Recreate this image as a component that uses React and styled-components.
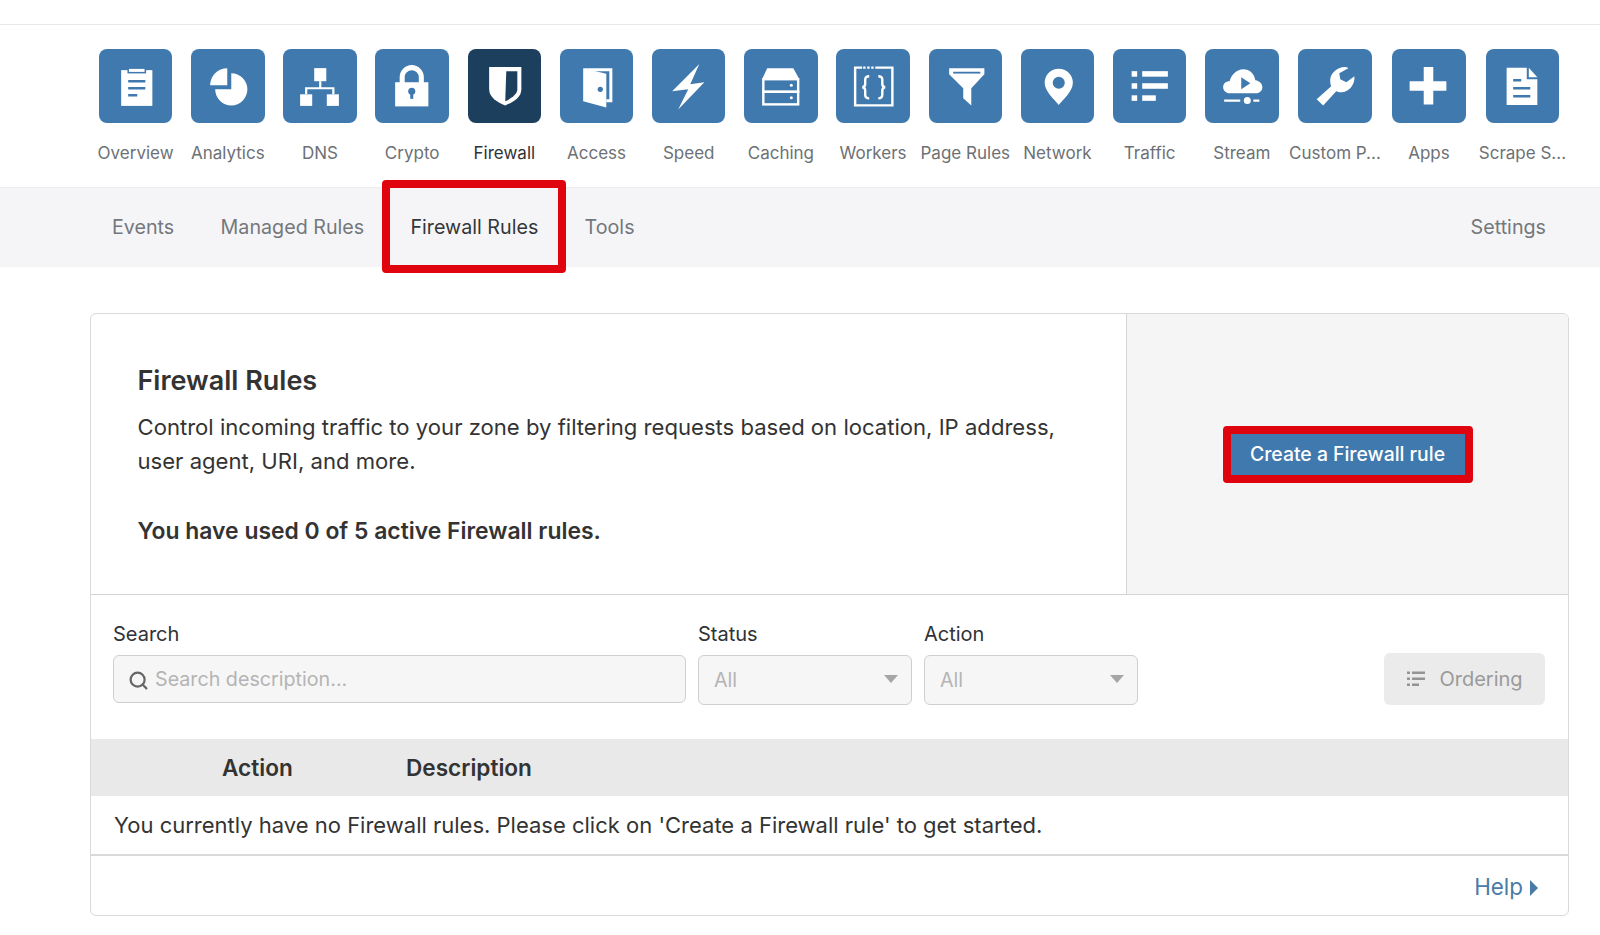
import React from "react";
import styled, { createGlobalStyle } from "styled-components";
import { Search } from "lucide-react";

const GlobalStyle = createGlobalStyle`
  html, body {
    margin: 0;
    background: #fff;
    font-family: Inter, "Noto Sans", "Liberation Sans", sans-serif;
    color: #333;
    overflow: hidden;
  }
  * { box-sizing: border-box; }
`;

const TopStrip = styled.div`
  height: 25px;
  border-bottom: 1px solid #e8e8e8;
`;

const IconNav = styled.nav`
  height: 162px;
  padding: 24px 0 0 89.5px;
  display: grid;
  grid-template-columns: repeat(13, 92.2px) 94px 94px 93px;
`;

const NavItem = styled.a`
  display: flex;
  flex-direction: column;
  align-items: center;
  gap: 20px;
  font-size: 17px;
  line-height: 20px;
  white-space: nowrap;
  color: ${(p) => (p.$active ? "#2f3236" : "#6d7175")};
`;

const IconBox = styled.span`
  width: 73.5px;
  height: 73.5px;
  border-radius: 8px;
  display: block;
  background: ${(p) => (p.$active ? "#1d3f5e" : "#3f79ae")};
  svg { display: block; width: 100%; height: 100%; }
`;

const SubNav = styled.div`
  height: 80px;
  padding: 0 54px 2px 112px;
  background: #f5f5f7;
  border-top: 1px solid #ececee;
  display: flex;
  align-items: center;
  gap: 46.3px;
  font-size: 19.7px;
  line-height: 24px;
  color: #74787c;
`;

const Tab = styled.a`
  position: relative;
  color: ${(p) => (p.$active ? "#33363a" : "inherit")};
  ${(p) => p.$push && "margin-left: auto;"}
`;

const RedFrame = styled.span`
  position: absolute;
  left: -28px;
  right: -28px;
  top: -35px;
  bottom: -34px;
  border: 8px solid #e0040e;
  border-radius: 4px;
`;

const Main = styled.main`
  padding: 46px 31px 0 90px;
`;

const Card = styled.section`
  height: 603px;
  border: 1.5px solid #d9d9d9;
  border-radius: 6px;
  overflow: hidden;
`;

const Intro = styled.div`
  height: 281px;
  display: flex;
  border-bottom: 1.5px solid #d4d4d4;
`;

const IntroText = styled.div`
  width: 1036px;
  padding: 48px 47px 0 46.5px;
  border-right: 1.5px solid #d4d4d4;
  font-size: 22.1px;
  line-height: 34.2px;
  color: #333;
`;

const Heading = styled.h2`
  margin: 0 0 10px;
  font-size: 27px;
  line-height: 38px;
  font-weight: 600;
`;

const Para = styled.p`
  margin: 0 0 35.4px;
`;

const Used = styled.p`
  margin: 0;
  font-size: 22.9px;
  font-weight: 600;
`;

const IntroAside = styled.div`
  flex: 1;
  background: #f5f5f5;
  display: flex;
  align-items: center;
  justify-content: center;
`;

const CreateButton = styled.button`
  width: 250px;
  height: 57px;
  border: 8px solid #e0040e;
  border-radius: 4px;
  background: #3f79ae;
  color: #fff;
  font: 500 19.4px Inter, sans-serif;
  padding: 0;
`;

const Filters = styled.div`
  height: 144px;
  padding: 25px 23px 0 22px;
  display: flex;
  align-items: flex-start;
  gap: 12px;
`;

const Field = styled.label`
  display: flex;
  flex-direction: column;
  gap: 7px;
  font-size: 20px;
  line-height: 28px;
  color: #2f3236;
  width: ${(p) => p.$w}px;
`;

const InputBox = styled.div`
  height: ${(p) => p.$h}px;
  border: 1.5px solid #cfcfcf;
  border-radius: 6px;
  background: #f6f6f6;
  padding: 0 13px 0 15px;
  display: flex;
  align-items: center;
  gap: 6px;
  font-size: 19.7px;
  color: #b4b4b4;
  svg { flex: none; color: #666; margin: 3px 0 0 -1px; }
`;

const Caret = styled.span`
  margin-left: auto;
  margin-top: -2px;
  border-left: 7.5px solid transparent;
  border-right: 7.5px solid transparent;
  border-top: 8px solid #a6a6a6;
`;

const OrderingButton = styled.button`
  margin-left: auto;
  margin-top: 33px;
  width: 161px;
  height: 52px;
  border: 0;
  border-radius: 6px;
  background: #ebebeb;
  color: #9a9a9a;
  font: 400 20px Inter, sans-serif;
  display: flex;
  align-items: center;
  justify-content: center;
  gap: 13px;
  padding: 0;
`;

const TableHead = styled.div`
  height: 57px;
  background: #e9e9e9;
  display: flex;
  align-items: center;
  font-size: 22.6px;
  font-weight: 600;
  color: #333;
`;

const HeadCell = styled.span`
  width: ${(p) => p.$w}px;
  ${(p) => p.$first && "margin-left: 131px;"}
`;

const EmptyRow = styled.div`
  height: 60px;
  padding-left: 23px;
  display: flex;
  align-items: center;
  border-bottom: 2px solid #d9d9d9;
  font-size: 22px;
  color: #333;
`;

const CardFoot = styled.div`
  height: 58px;
  padding: 2px 30px 0 0;
  display: flex;
  align-items: center;
  justify-content: flex-end;
  gap: 7px;
`;

const HelpLink = styled.a`
  font-size: 22.4px;
  color: #4a7ba7;
`;

const HelpCaret = styled.span`
  border-top: 8px solid transparent;
  border-bottom: 8px solid transparent;
  border-left: 8.5px solid #4a7ba7;
  margin-top: 3px;
`;

const BLUE = "#3f79ae";

const Overview = () => (
  <>
    <rect x="22" y="21" width="31" height="35.5" />
    <rect x="29" y="19" width="17" height="4.5" stroke={BLUE} strokeWidth="1.5" />
    <path d="M29 32h17M29 39h17M29 46h9" stroke={BLUE} strokeWidth="2.4" />
  </>
);

const Analytics = () => (
  <>
    <path d="M40 24A16 16 0 1 1 24 40H40Z" />
    <path d="M36 19V36H19A17 17 0 0 1 36 19Z" />
  </>
);

const Dns = () => (
  <>
    <rect x="31" y="19" width="12" height="13" />
    <rect x="17" y="45" width="12" height="11.5" />
    <rect x="43.5" y="45" width="12" height="11.5" />
    <path d="M37 32v7M23 45v-6h27v6" fill="none" stroke="#fff" strokeWidth="2.2" />
  </>
);

const Crypto = () => (
  <>
    <rect x="20" y="33" width="33" height="24" />
    <path d="M27 34v-6a9.5 9.5 0 0 1 19 0v6" fill="none" stroke="#fff" strokeWidth="5" />
    <circle cx="36.5" cy="42" r="3.5" fill={BLUE} />
    <rect x="35" y="43" width="3" height="6.5" fill={BLUE} />
  </>
);

const Firewall = () => (
  <>
    <path d="M21 18H53V40C53 48 45 53 37 56C29 53 21 48 21 40Z" />
    <path d="M38 22H49V40C49 45 43 49 37 52Z" fill="#1d3f5e" />
  </>
);

const Access = () => (
  <>
    <path d="M23 19L46 24.5V58L23 52Z" />
    <path d="M23 19H52V53H46V50H49V22H33Z" />
    <circle cx="40" cy="40" r="2.6" fill={BLUE} />
  </>
);

const Speed = () => <path d="M47 15L20 42L36 40L26 60L52 33L38 35Z" />;

const Caching = () => (
  <>
    <path d="M23 19H49L55 30H18Z" />
    <rect x="19.2" y="30" width="34.6" height="12.5" fill="none" stroke="#fff" strokeWidth="2.4" />
    <rect x="19.2" y="42.5" width="34.6" height="12.5" fill="none" stroke="#fff" strokeWidth="2.4" />
    <circle cx="47" cy="36" r="1.5" />
    <circle cx="47" cy="48.5" r="1.5" />
  </>
);

const Workers = () => (
  <>
    <path d="M26 18.5H19V56H56V18.5H39" fill="none" stroke="#fff" strokeWidth="2.4" />
    <path d="M27 18.5h2.4M31 18.5h2.4M35 18.5h2.4" stroke="#fff" strokeWidth="2.4" />
    <path
      d="M33 27c-3.5 0-4 1.5-4 3.5v4c0 2-1 3.5-3 3.5 2 0 3 1.5 3 3.5v4c0 2 .5 3.5 4 3.5M42 27c3.5 0 4 1.5 4 3.5v4c0 2 1 3.5 3 3.5-2 0-3 1.5-3 3.5v4c0 2-.5 3.5-4 3.5"
      fill="none"
      stroke="#fff"
      strokeWidth="2.4"
    />
  </>
);

const PageRules = () => (
  <>
    <path d="M20 19H55V25L42 39V56L34 49V39L20 25Z" />
    <path d="M24 23.5H51" stroke={BLUE} strokeWidth="1.8" />
  </>
);

const Network = () => (
  <path
    fillRule="evenodd"
    d="M37.5 55.5C33 50 23.5 42 23.5 33.5A14 14 0 0 1 51.5 33.5C51.5 42 42 50 37.5 55.5ZM37.5 27.5A6 6 0 1 0 37.5 39.5A6 6 0 1 0 37.5 27.5Z"
  />
);

const Traffic = () => (
  <>
    <rect x="18.5" y="22" width="5.5" height="5.5" />
    <rect x="18.5" y="34" width="5.5" height="5.5" />
    <rect x="18.5" y="46" width="5.5" height="5.5" />
    <rect x="29" y="22" width="25.5" height="5.5" />
    <rect x="29" y="34" width="25.5" height="5.5" />
    <rect x="29" y="46" width="13.5" height="5.5" />
  </>
);

const Stream = () => (
  <>
    <path d="M25 44C20 44 18 40.5 18 38C18 34 21 32 24.5 32C26 25 32 20 38 20C44.5 20 49 24.5 50 31C54.5 31.5 57 35 57 38C57 41.5 54 44 51 44Z" />
    <path d="M36 28L45 34L36 40Z" fill={BLUE} />
    <path d="M19 51.2H35M48 51.2H54" stroke="#fff" strokeWidth="2.2" />
    <circle cx="42" cy="51.2" r="3.5" />
  </>
);

const CustomPages = () => (
  <path d="M46 18C40 18 33 23 32 30C32 33 32 35 33 37L18.5 50L25 56L38 42C40 43 42 43 44 43C51 42 57 35 56 27L48 33L42 30L41 24L50 19C49 18 47 18 46 18Z" />
);

const Apps = () => <path d="M31.5 18H41V32H54V41.5H41V55H31.5V41.5H17.5V32H31.5Z" />;

const ScrapeShield = () => (
  <>
    <path d="M20.5 18.5H40.5V30H51V55.5H20.5Z" />
    <path d="M42.5 18.5L51 28H42.5Z" />
    <path d="M27 31H35M27 39H44M27 47H44" stroke={BLUE} strokeWidth="2.4" />
  </>
);

const navItems = [
  { name: "Overview", Glyph: Overview },
  { name: "Analytics", Glyph: Analytics },
  { name: "DNS", Glyph: Dns },
  { name: "Crypto", Glyph: Crypto },
  { name: "Firewall", Glyph: Firewall, active: true },
  { name: "Access", Glyph: Access },
  { name: "Speed", Glyph: Speed },
  { name: "Caching", Glyph: Caching },
  { name: "Workers", Glyph: Workers },
  { name: "Page Rules", Glyph: PageRules },
  { name: "Network", Glyph: Network },
  { name: "Traffic", Glyph: Traffic },
  { name: "Stream", Glyph: Stream },
  { name: "Custom P...", Glyph: CustomPages },
  { name: "Apps", Glyph: Apps },
  { name: "Scrape S...", Glyph: ScrapeShield },
];

const OrderingIcon = () => (
  <svg width="20" height="18" viewBox="0 0 20 18" fill="#949494">
    <rect x="1" y="1.5" width="3" height="2.5" />
    <rect x="1" y="7.5" width="3" height="2.5" />
    <rect x="1" y="13.5" width="3" height="2.5" />
    <rect x="6" y="1.5" width="13" height="2.5" />
    <rect x="6" y="7.5" width="13" height="2.5" />
    <rect x="6" y="13.5" width="7" height="2.5" />
  </svg>
);

export default function App() {
  return (
    <>
      <GlobalStyle />
      <TopStrip />
      <IconNav>
        {navItems.map(({ name, Glyph, active }) => (
          <NavItem key={name} $active={active}>
            <IconBox $active={active}>
              <svg viewBox="0 0 73 73" fill="#fff">
                <Glyph />
              </svg>
            </IconBox>
            {name}
          </NavItem>
        ))}
      </IconNav>
      <SubNav>
        <Tab>Events</Tab>
        <Tab>Managed Rules</Tab>
        <Tab $active>
          Firewall Rules
          <RedFrame />
        </Tab>
        <Tab>Tools</Tab>
        <Tab $push>Settings</Tab>
      </SubNav>
      <Main>
        <Card>
          <Intro>
            <IntroText>
              <Heading>Firewall Rules</Heading>
              <Para>
                Control incoming traffic to your zone by filtering requests based on location, IP address,
                user agent, URI, and more.
              </Para>
              <Used>You have used 0 of 5 active Firewall rules.</Used>
            </IntroText>
            <IntroAside>
              <CreateButton>Create a Firewall rule</CreateButton>
            </IntroAside>
          </Intro>
          <Filters>
            <Field $w={573}>
              Search
              <InputBox $h={48}>
                <Search size={21} strokeWidth={2.5} />
                Search description...
              </InputBox>
            </Field>
            <Field $w={214}>
              Status
              <InputBox $h={50}>
                All
                <Caret />
              </InputBox>
            </Field>
            <Field $w={214}>
              Action
              <InputBox $h={50}>
                All
                <Caret />
              </InputBox>
            </Field>
            <OrderingButton>
              <OrderingIcon />
              Ordering
            </OrderingButton>
          </Filters>
          <TableHead>
            <HeadCell $first $w={184}>Action</HeadCell>
            <HeadCell $w={200}>Description</HeadCell>
          </TableHead>
          <EmptyRow>You currently have no Firewall rules. Please click on 'Create a Firewall rule' to get started.</EmptyRow>
          <CardFoot>
            <HelpLink>Help</HelpLink>
            <HelpCaret />
          </CardFoot>
        </Card>
      </Main>
    </>
  );
}
